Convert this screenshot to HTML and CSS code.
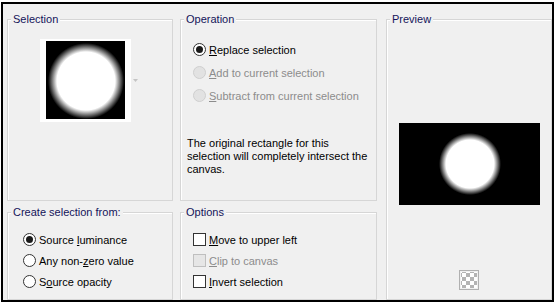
FILE: index.html
```html
<!DOCTYPE html>
<html>
<head>
<meta charset="utf-8">
<link rel="stylesheet" href="styles.css">
</head>
<body>
<div class="dlg">
  <fieldset class="grp sel">
    <legend>Selection</legend>
    <div class="thumbrow">
      <div class="thumb"><div class="thumb-img"></div></div>
      <svg class="drop" width="5" height="3" viewBox="0 0 5 3"><path d="M0 0H5L2.5 3Z" fill="#c4c4c4"/></svg>
    </div>
  </fieldset>
  <fieldset class="grp op">
    <legend>Operation</legend>
    <div class="rows r23">
      <label class="row"><span class="radio on"></span><span><u>R</u>eplace selection</span></label>
      <label class="row dis"><span class="radio"></span><span><u>A</u>dd to current selection</span></label>
      <label class="row dis"><span class="radio"></span><span><u>S</u>ubtract from current selection</span></label>
    </div>
    <p class="note">The original rectangle for this<br>selection will completely intersect the<br>canvas.</p>
  </fieldset>
  <fieldset class="grp preview">
    <legend>Preview</legend>
    <div class="pv-img"></div>
    <div class="checker"></div>
  </fieldset>
  <fieldset class="grp create">
    <legend>Create selection from:</legend>
    <div class="rows r21">
      <label class="row"><span class="radio on"></span><span>Source <u>l</u>uminance</span></label>
      <label class="row"><span class="radio"></span><span>Any non-<u>z</u>ero value</span></label>
      <label class="row"><span class="radio"></span><span>S<u>o</u>urce opacity</span></label>
    </div>
  </fieldset>
  <fieldset class="grp options">
    <legend>Options</legend>
    <div class="rows r21">
      <label class="row"><span class="check"></span><span><u>M</u>ove to upper left</span></label>
      <label class="row dis"><span class="check"></span><span><u>C</u>lip to canvas</span></label>
      <label class="row"><span class="check"></span><span><u>I</u>nvert selection</span></label>
    </div>
  </fieldset>
</div>
</body>
</html>
```

FILE: styles.css
```css
html, body {
  margin: 0;
  padding: 0;
  background: #ffffff;
}

body {
  font-family: "Liberation Sans", Arial, sans-serif;
  font-size: 11px;
  color: #000;
}

.dlg {
  box-sizing: border-box;
  width: 553px;
  height: 300px;
  margin: 2px 0 0 1px;
  border: 2px solid #000;
  background: #f0f0f0;
  padding: 9px 0 0 4px;
  display: grid;
  grid-template-columns: 166px 197px 168px;
  grid-template-rows: 188px 94px;
  column-gap: 7px;
  row-gap: 5px;
}

.grp {
  box-sizing: border-box;
  margin: 0;
  padding: 0;
  min-width: 0;
  border: 1px solid #d6d6d6;
  box-shadow: inset 1px 1px 0 #fff;
}

.grp legend {
  margin-left: 3px;
  padding: 0 2px;
  line-height: 13px;
  color: #14145a;
  background: #f0f0f0;
}

.sel { grid-column: 1; grid-row: 1; }
.op { grid-column: 2; grid-row: 1; }
.preview {
  grid-column: 3;
  grid-row: 1 / span 2;
  margin-left: 2px;
  display: flex;
  flex-direction: column;
  align-items: center;
}
.create { grid-column: 1; grid-row: 2; }
.options { grid-column: 2; grid-row: 2; }

.thumbrow {
  display: flex;
  align-items: center;
  margin: 13px 0 0 32px;
}

.thumb {
  width: 91px;
  height: 83px;
  background: #fff;
  box-sizing: border-box;
  padding: 2px 0 0 6px;
}

.thumb-img {
  width: 79px;
  height: 78px;
  background: radial-gradient(circle at 40px 40px, #fff 0, #fff 29px, #000 38px);
}

.drop {
  margin-left: 2px;
  display: block;
}

.rows {
  display: flex;
  flex-direction: column;
}

.r23 { margin-top: 12px; }
.r23 .row { height: 23px; padding-left: 12px; }

.r21 { margin-top: 10px; }
.r21 .row { height: 21px; }
.create .row { padding-left: 15px; }
.options .row { padding-left: 12px; }

.row {
  display: flex;
  align-items: center;
  gap: 3px;
  white-space: nowrap;
}

.row.dis { color: #8c8c8c; }

.radio {
  box-sizing: border-box;
  width: 13px;
  height: 13px;
  border-radius: 50%;
  border: 1px solid #333;
  background: #fff;
  display: flex;
  align-items: center;
  justify-content: center;
  flex: none;
}

.radio.on::after {
  content: "";
  width: 7px;
  height: 7px;
  border-radius: 50%;
  background: #1a1a1a;
}

.dis .radio {
  border-color: #cfcfcf;
  background: #e2e2e2;
}

.check {
  box-sizing: border-box;
  width: 13px;
  height: 13px;
  border: 1px solid #333;
  background: #fff;
  flex: none;
}

.dis .check {
  border-color: #bfbfbf;
  background: #e6e6e6;
}

.note {
  margin: 30px 0 0 6px;
  line-height: 13px;
}

.pv-img {
  margin-top: 97px;
  width: 141px;
  height: 82px;
  background: radial-gradient(circle at 71px 41px, #fff 0, #fff 24px, #000 31px);
}

.checker {
  margin-top: 65px;
  box-sizing: border-box;
  width: 20px;
  height: 20px;
  border: 1px solid #b0b0b0;
  padding: 1px;
  background-color: #fff;
  background-image: conic-gradient(#b4b4b4 25%, #fff 0 50%, #b4b4b4 0 75%, #fff 0);
  background-size: 8px 8px;
  background-position: 1px 1px;
  background-clip: content-box;
  background-origin: content-box;
}
```
